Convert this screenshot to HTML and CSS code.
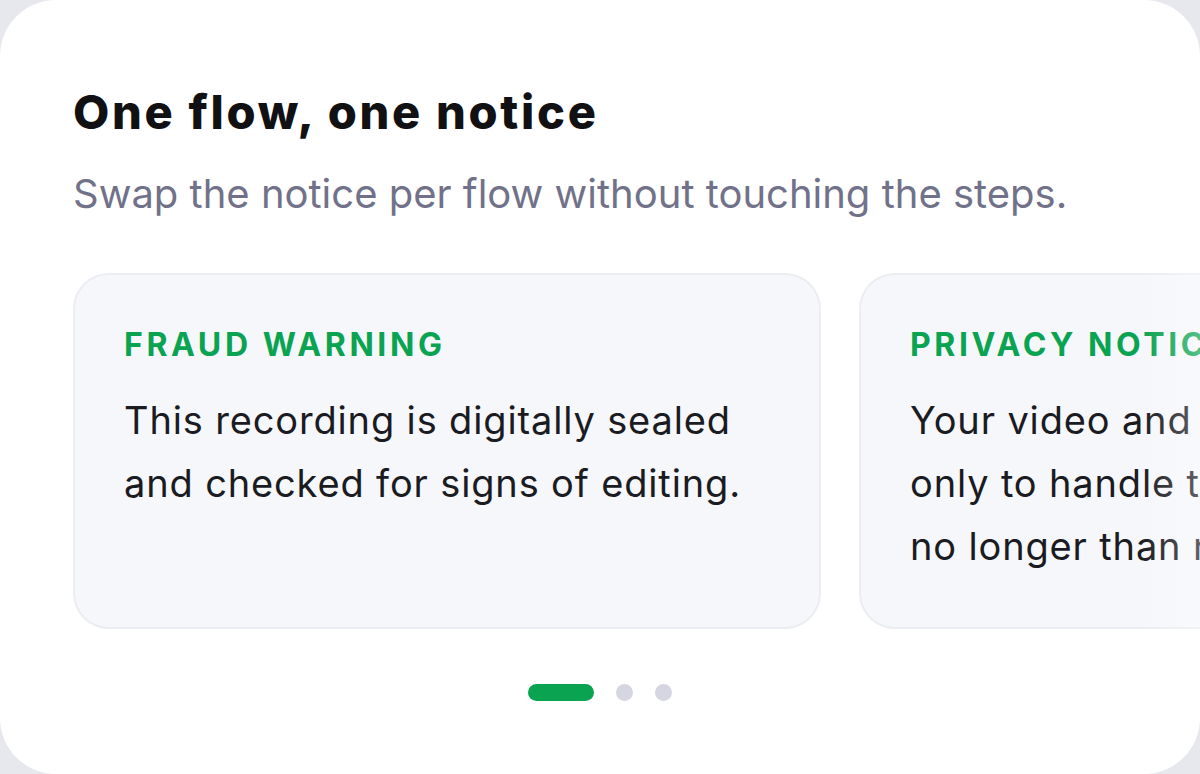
FILE: index.html
```html
<!DOCTYPE html>
<html lang="en">
<head>
<meta charset="utf-8">
<title>One flow, one notice</title>
<link rel="stylesheet" href="styles.css">
</head>
<body>
<main class="panel">
  <header class="intro">
    <h1 class="title">One flow, one notice</h1>
    <p class="subtitle">Swap the notice per flow without touching the steps.</p>
  </header>
  <section class="carousel">
    <div class="track">
      <article class="notice">
        <h2 class="notice-label">FRAUD WARNING</h2>
        <p class="notice-text">This recording is digitally sealed<br>and checked for signs of editing.</p>
      </article>
      <article class="notice">
        <h2 class="notice-label">PRIVACY NOTICE</h2>
        <p class="notice-text">Your video and photo ID are used<br>only to handle this check and kept<br>no longer than needed.</p>
      </article>
      <article class="notice">
        <h2 class="notice-label">CONSENT</h2>
        <p class="notice-text">By continuing you agree to be<br>recorded for this verification.</p>
      </article>
    </div>
  </section>
  <nav class="dots" aria-label="Slides">
    <span class="dot dot-active"></span>
    <span class="dot"></span>
    <span class="dot"></span>
  </nav>
</main>
</body>
</html>
```
FILE: styles.css
```css
html, body {
  margin: 0;
  padding: 0;
  background: #e7e7ee;
}
body {
  width: 1200px;
  height: 774px;
  overflow: hidden;
}
.panel {
  box-sizing: border-box;
  width: 1200px;
  height: 774px;
  background: #ffffff;
  border-radius: 56px;
  overflow: hidden;
  padding: 84px 0 0 73px;
  display: flex;
  flex-direction: column;
  position: relative;
}
.intro {
  padding-right: 40px;
}
.title {
  margin: 0;
  font-family: Inter, "Liberation Sans", sans-serif;
  font-weight: 800;
  font-size: 47px;
  line-height: 56px;
  letter-spacing: 2.7px;
  color: #111114;
  white-space: nowrap;
}
.subtitle {
  margin: 30px 0 0;
  font-family: Inter, "Liberation Sans", sans-serif;
  font-weight: 400;
  font-size: 40px;
  line-height: 48px;
  color: #71728a;
  white-space: nowrap;
}
.carousel {
  margin-top: 55px;
  position: relative;
}
.carousel::after {
  content: "";
  position: absolute;
  top: 0;
  right: 0;
  bottom: 0;
  width: 60px;
  background: linear-gradient(to right, rgba(255,255,255,0), rgba(255,255,255,0.3));
  pointer-events: none;
}
.track {
  display: flex;
  gap: 38px;
}
.notice {
  flex: none;
  box-sizing: border-box;
  width: 748px;
  height: 356px;
  background: #f6f7fb;
  border: 2px solid #ecedf2;
  border-radius: 36px;
  padding: 51px 30px 0 49px;
}
.notice-label {
  margin: 0;
  font-family: Inter, "Liberation Sans", sans-serif;
  font-weight: 700;
  font-size: 32px;
  line-height: 38px;
  letter-spacing: 3.6px;
  color: #0aa351;
  white-space: nowrap;
}
.notice-text {
  margin: 25px 0 0;
  font-family: Inter, "Liberation Sans", sans-serif;
  font-weight: 400;
  font-size: 38px;
  line-height: 63px;
  letter-spacing: 0.85px;
  color: #1b1b22;
  white-space: nowrap;
}
.dots {
  margin-top: 55px;
  margin-left: -73px;
  display: flex;
  justify-content: center;
  align-items: center;
  gap: 22px;
}
.dot {
  width: 17px;
  height: 17px;
  border-radius: 50%;
  background: #d5d6e2;
}
.dot-active {
  width: 66px;
  border-radius: 9px;
  background: #0aa351;
}
```
